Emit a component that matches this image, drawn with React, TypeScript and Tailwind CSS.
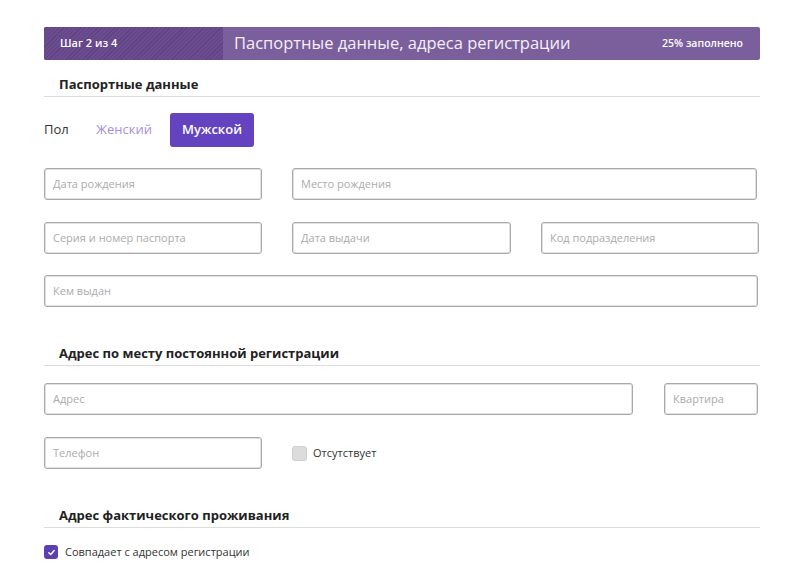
import React from "react";

function Field({ placeholder, className = "" }: { placeholder: string; className?: string }) {
  return (
    <div
      className={
        "h-[32px] rounded-[3px] border border-[#a9a9a9] shadow-[inset_0_0_0_1px_#e2e2e2] flex items-center px-[8px] text-[11px] text-[#ababab] bg-white " +
        className
      }
    >
      {placeholder}
    </div>
  );
}

function Section({ title }: { title: string }) {
  return (
    <div className="border-b border-[#dcdcdc] pb-[4px] pl-[15px] text-[13px] leading-[16px] font-bold text-[#222]">
      {title}
    </div>
  );
}

export default function App() {
  return (
    <div className="w-[800px] h-[570px] bg-white font-['Open_Sans',sans-serif] text-[#333] overflow-hidden">
      <div className="pl-[44px] pr-[40px] pt-[27px]">
        {/* header */}
        <div className="h-[33px] flex rounded-[2px] overflow-hidden bg-[#7b5e9c] text-white">
          <div className="w-[179px] flex items-center pl-[16px] text-[11px] font-semibold bg-[repeating-linear-gradient(135deg,#6b4c8f_0px,#6b4c8f_2px,#604384_2px,#604384_3px)]">
            Шаг 2 из 4
          </div>
          <div className="flex-1 flex items-center pl-[11px] text-[16.5px] text-[#f4f0f8]">
            Паспортные данные, адреса регистрации
          </div>
          <div className="flex items-center pr-[17px] text-[10.5px] font-semibold">25% заполнено</div>
        </div>

        <div className="mt-[16px]">
          <Section title="Паспортные данные" />
        </div>

        <div className="mt-[16px] flex items-center h-[34px] text-[13px]">
          <span className="w-[52px] text-[#333]">Пол</span>
          <span className="w-[74px] text-[#a690d9]">Женский</span>
          <span className="h-[34px] px-[12px] rounded-[3px] bg-[#6443c0] text-white flex items-center font-semibold">
            Мужской
          </span>
        </div>

        <div className="mt-[21px] grid grid-cols-[218px_1fr] gap-x-[30px]">
          <Field placeholder="Дата рождения" />
          <Field placeholder="Место рождения" className="mr-[3px]" />
        </div>

        <div className="mt-[22px] grid grid-cols-[218px_219px_218px] gap-x-[30px]">
          <Field placeholder="Серия и номер паспорта" />
          <Field placeholder="Дата выдачи" />
          <Field placeholder="Код подразделения" />
        </div>

        <div className="mt-[21px]">
          <Field placeholder="Кем выдан" className="mr-[2px]" />
        </div>

        <div className="mt-[38px]">
          <Section title="Адрес по месту постоянной регистрации" />
        </div>

        <div className="mt-[17px] flex gap-x-[31px]">
          <Field placeholder="Адрес" className="flex-1" />
          <Field placeholder="Квартира" className="w-[94px] mr-[2px]" />
        </div>

        <div className="mt-[22px] flex items-center">
          <Field placeholder="Телефон" className="w-[218px]" />
          <div className="ml-[30px] flex items-center gap-[6px] text-[11px] text-[#333]">
            <span className="w-[15px] h-[15px] rounded-[3px] bg-[#dcdcdc] border border-[#cfcfcf]" />
            Отсутствует
          </div>
        </div>

        <div className="mt-[38px]">
          <Section title="Адрес фактического проживания" />
        </div>

        <div className="mt-[17px] flex items-center gap-[7px] text-[11px] leading-[14px] text-[#333]">
          <span className="w-[14px] h-[14px] rounded-[3px] bg-[#5c3fb0] flex items-center justify-center">
            <svg width="9" height="9" viewBox="0 0 10 10">
              <path d="M2 5.2 L4.1 7.2 L8 2.8" fill="none" stroke="white" strokeWidth="1.6" strokeLinecap="round" strokeLinejoin="round" />
            </svg>
          </span>
          Совпадает с адресом регистрации
        </div>
      </div>
    </div>
  );
}
